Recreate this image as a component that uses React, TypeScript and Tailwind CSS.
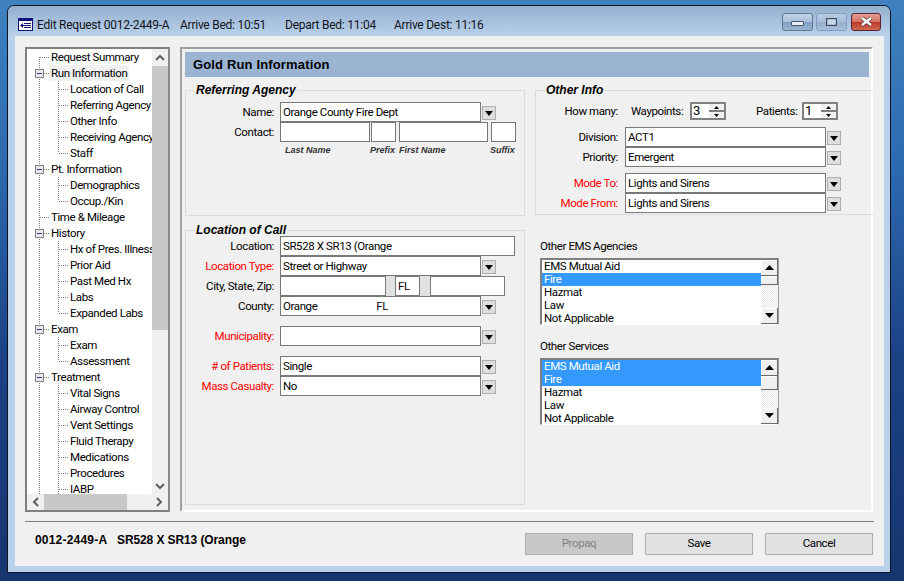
const UI_FONT = "font-['Roboto','Liberation_Sans',Arial,sans-serif]";
const BOLD_FONT = "font-['Liberation_Sans',Arial,sans-serif]";

// ---- tree data ----
type TreeItem = { label: string; level: 0 | 1; box?: boolean; last?: boolean; selected?: boolean };

const treeItems: TreeItem[] = [
  { label: "Request Summary", level: 0 },
  { label: "Run Information", level: 0, box: true, selected: true },
  { label: "Location of Call", level: 1 },
  { label: "Referring Agency", level: 1 },
  { label: "Other Info", level: 1 },
  { label: "Receiving Agency", level: 1 },
  { label: "Staff", level: 1, last: true },
  { label: "Pt. Information", level: 0, box: true },
  { label: "Demographics", level: 1 },
  { label: "Occup./Kin", level: 1, last: true },
  { label: "Time & Mileage", level: 0 },
  { label: "History", level: 0, box: true },
  { label: "Hx of Pres. Illness", level: 1 },
  { label: "Prior Aid", level: 1 },
  { label: "Past Med Hx", level: 1 },
  { label: "Labs", level: 1 },
  { label: "Expanded Labs", level: 1, last: true },
  { label: "Exam", level: 0, box: true },
  { label: "Exam", level: 1 },
  { label: "Assessment", level: 1, last: true },
  { label: "Treatment", level: 0, box: true },
  { label: "Vital Signs", level: 1 },
  { label: "Airway Control", level: 1 },
  { label: "Vent Settings", level: 1 },
  { label: "Fluid Therapy", level: 1 },
  { label: "Medications", level: 1 },
  { label: "Procedures", level: 1 },
  { label: "IABP", level: 1 },
];

function TreeRow({ item, first }: { item: TreeItem; first: boolean }) {
  const dots = { stroke: "#808080", strokeDasharray: "1 1", strokeWidth: 1, fill: "none" };
  return (
    <div className="flex h-4 shrink-0 items-center whitespace-nowrap">
      <svg width="43" height="16" className="shrink-0">
        <path d={first ? "M12.5 8V16" : "M12.5 0V16"} {...dots} />
        {item.level === 0 && <path d="M13 8.5H22" {...dots} />}
        {item.level === 1 && (
          <>
            <path d={item.last ? "M31.5 0V8" : "M31.5 0V16"} {...dots} />
            <path d="M32 8.5H41" {...dots} />
          </>
        )}
        {item.box && (
          <>
            <rect x="8.5" y="4.5" width="8" height="8" fill="#e8e8e8" stroke="#808080" />
            <path d="M10 8.5H15" stroke="#2b3f8c" fill="none" />
          </>
        )}
      </svg>
      <span
        className={
          item.level === 0
            ? item.selected
              ? "ml-[-21px] bg-[#f0f0f0] px-[2px] leading-4"
              : "ml-[-19px] leading-4"
            : "leading-4"
        }
      >
        {item.label}
      </span>
    </div>
  );
}

function Chevron({ dir }: { dir: "up" | "down" | "left" | "right" }) {
  const d = {
    up: "M1 6L5 2L9 6",
    down: "M1 2L5 6L9 2",
    left: "M6 1L2 5L6 9",
    right: "M2 1L6 5L2 9",
  }[dir];
  const horizontal = dir === "left" || dir === "right";
  return (
    <svg width={horizontal ? 8 : 10} height={horizontal ? 10 : 8} className="shrink-0">
      <path d={d} fill="none" stroke="#606060" strokeWidth="2" />
    </svg>
  );
}

function TreePanel() {
  return (
    <div className="flex h-[465px] w-[145px] shrink-0 flex-col border-2 border-[#808080] bg-[#f0f0f0] border-r-[#8a8a8a]">
      <div className="flex min-h-0 flex-1">
        <div className="w-[125px] overflow-hidden rounded-br-[3px] bg-white text-black">
          {treeItems.map((item, i) => (
            <TreeRow key={i} item={item} first={i === 0} />
          ))}
        </div>
        <div className="flex w-[16px] flex-col items-center">
          <div className="flex h-[17px] shrink-0 items-center justify-center">
            <Chevron dir="up" />
          </div>
          <div className="h-[264px] w-full bg-[#c8c8c8]" />
          <div className="flex-1" />
          <div className="flex h-[16px] shrink-0 items-center justify-center">
            <Chevron dir="down" />
          </div>
        </div>
      </div>
      <div className="flex h-[16px] shrink-0 items-center">
        <div className="flex w-[17px] justify-center">
          <Chevron dir="left" />
        </div>
        <div className="h-full w-[83px] bg-[#c8c8c8]" />
        <div className="flex-1" />
        <div className="flex w-[17px] justify-center pr-[1px]">
          <Chevron dir="right" />
        </div>
      </div>
    </div>
  );
}

// ---- form bits ----
function Label({ text, red, className }: { text: string; red?: boolean; className: string }) {
  return (
    <span className={`shrink-0 whitespace-nowrap pt-[2px] text-right ${red ? "text-[#ff0000]" : "text-black"} ${className}`}>
      {text}
    </span>
  );
}

function Field({ value, className }: { value?: string; className: string }) {
  return (
    <div
      className={`flex h-[20px] shrink-0 items-center overflow-hidden whitespace-pre border border-[#787878] bg-white pl-[2px] pt-[2px] text-black ${className}`}
    >
      {value}
    </div>
  );
}

function DropButton() {
  return (
    <div className="ml-[1px] mt-[2px] flex h-[14px] w-[14px] shrink-0 items-center justify-center border border-[#adadad] bg-[#dedede]">
      <svg width="8" height="5">
        <path d="M0 0H8L4 5Z" fill="#000" />
      </svg>
    </div>
  );
}

function ComboRow({
  label,
  value,
  red,
  labelClass,
  fieldClass,
  className,
}: {
  label: string;
  value?: string;
  red?: boolean;
  labelClass: string;
  fieldClass: string;
  className?: string;
}) {
  return (
    <div className={`flex items-center ${className ?? ""}`}>
      <Label text={label} red={red} className={labelClass} />
      <Field value={value} className={fieldClass} />
      <DropButton />
    </div>
  );
}

function GroupBox({ title, className, children }: { title: string; className: string; children?: React.ReactNode }) {
  return (
    <div className={`border border-[#dcdcdc] ${className}`}>
      <div
        className={`-mt-[8px] ml-[9px] h-[15px] w-fit bg-[#f0f0f0] px-[1px] text-[12px] font-bold italic leading-[15px] tracking-normal text-black ${BOLD_FONT}`}
      >
        {title}
      </div>
      {children}
    </div>
  );
}

function SpinBox({ value }: { value: string }) {
  return (
    <div className="flex h-[18px] w-[36px] shrink-0 items-stretch border-2 border-[#808080] bg-white pl-[1px] text-[13px] leading-[14px] text-black">
      <span className="flex-1">{value}</span>
      <div className="flex w-[15px] flex-col">
        <div className="flex h-[6px] items-center justify-center bg-[#f0f0f0]">
          <svg width="5" height="3">
            <path d="M2.5 0L5 3H0Z" fill="#000" />
          </svg>
        </div>
        <div className="h-[2px] bg-[#808080]" />
        <div className="flex h-[6px] items-center justify-center bg-[#f0f0f0]">
          <svg width="5" height="3">
            <path d="M0 0H5L2.5 3Z" fill="#000" />
          </svg>
        </div>
      </div>
    </div>
  );
}

function ScrollArrow({ dir }: { dir: "up" | "down" }) {
  return (
    <div className="flex h-[16px] shrink-0 items-center justify-center border-b border-r border-[#696969] bg-[#f0f0f0] shadow-[inset_1px_1px_0_#fff]">
      <svg width="9" height="5">
        <path d={dir === "up" ? "M4.5 0L9 5H0Z" : "M0 0H9L4.5 5Z"} fill="#000" />
      </svg>
    </div>
  );
}

function ListBox({ selected, thumbClass }: { selected: string[]; thumbClass: string }) {
  const options = ["EMS Mutual Aid", "Fire", "Hazmat", "Law", "Not Applicable"];
  return (
    <div className="flex h-[67px] w-[239px] border-b border-l-2 border-r border-t-2 border-[#808080] border-b-white border-r-[#a0a0a0] bg-white">
      <div className="flex-1 overflow-hidden text-black">
        {options.map((o) => (
          <div
            key={o}
            className={`h-[13px] pl-[2px] leading-[13px] ${selected.includes(o) ? "bg-[#3399ff] text-white" : ""}`}
          >
            {o}
          </div>
        ))}
      </div>
      <div className="flex w-[17px] flex-col bg-[repeating-conic-gradient(#e8e8e8_0_25%,#fff_0_50%)] bg-[length:2px_2px]">
        <ScrollArrow dir="up" />
        <div className={`shrink-0 border-b border-r border-[#696969] bg-[#f0f0f0] shadow-[inset_1px_1px_0_#fff] ${thumbClass}`} />
        <div className="flex-1" />
        <ScrollArrow dir="down" />
      </div>
    </div>
  );
}

function ActionButton({ text, disabled }: { text: string; disabled?: boolean }) {
  return (
    <div
      className={`flex h-[22px] w-[108px] items-center justify-center border border-[#adadad] ${
        disabled ? "bg-[#c8c8c8] text-[#808080]" : "bg-[#e1e1e1] text-black"
      }`}
    >
      {text}
    </div>
  );
}

function ReferringAgency() {
  return (
    <GroupBox title="Referring Agency" className="h-[126px]">
      <ComboRow
        className="mt-[4px]"
        label="Name:"
        value="Orange County Fire Dept"
        labelClass="w-[88px]"
        fieldClass="ml-[6px] w-[201px]"
      />
      <div className="flex">
        <Label text="Contact:" className="w-[88px]" />
        <Field className="ml-[6px] w-[90px]" />
        <Field className="ml-[1px] w-[25px]" />
        <Field className="ml-[3px] w-[89px]" />
        <Field className="ml-[3px] w-[25px]" />
      </div>
      <div className={`ml-[94px] mt-[2px] flex text-[9px] font-bold italic leading-[12px] tracking-normal text-[#333] ${BOLD_FONT}`}>
        <span className="ml-[5px] w-[85px]">Last Name</span>
        <span className="w-[29px]">Prefix</span>
        <span className="w-[91px]">First Name</span>
        <span>Suffix</span>
      </div>
    </GroupBox>
  );
}

function LocationOfCall() {
  const labelClass = "w-[88px]";
  const fieldClass = "ml-[6px] w-[201px]";
  return (
    <GroupBox title="Location of Call" className="mt-[14px] h-[275px]">
      <div className="mt-[-2px] flex items-center">
        <Label text="Location:" className={labelClass} />
        <Field value="SR528 X SR13 (Orange" className="ml-[6px] w-[235px]" />
      </div>
      <ComboRow label="Location Type:" red value="Street or Highway" labelClass={labelClass} fieldClass={fieldClass} />
      <div className="flex items-center">
        <Label text="City, State, Zip:" className={labelClass} />
        <Field className="ml-[6px] w-[106px]" />
        <div className="h-[20px] w-[9px] bg-[#e1e1e1]" />
        <Field value="FL" className="w-[25px]" />
        <div className="h-[20px] w-[10px] bg-[#e1e1e1]" />
        <Field className="w-[75px]" />
      </div>
      <ComboRow
        label="County:"
        value={"Orange                        FL"}
        labelClass={labelClass}
        fieldClass={fieldClass}
      />
      <ComboRow className="mt-[10px]" label="Municipality:" red labelClass={labelClass} fieldClass={fieldClass} />
      <ComboRow
        className="mt-[10px]"
        label="# of Patients:"
        red
        value="Single"
        labelClass={labelClass}
        fieldClass={fieldClass}
      />
      <ComboRow label="Mass Casualty:" red value="No" labelClass={labelClass} fieldClass={fieldClass} />
    </GroupBox>
  );
}

function OtherInfo() {
  const labelClass = "w-[82px]";
  const fieldClass = "ml-[7px] w-[201px]";
  return (
    <GroupBox title="Other Info" className="h-[125px] border-r-0">
      <div className="mt-[4px] flex h-[18px] items-center">
        <Label text="How many:" className={labelClass} />
        <Label text="Waypoints:" className="ml-[13px] w-[52px]" />
        <div className="ml-[7px]">
          <SpinBox value="3" />
        </div>
        <Label text="Patients:" className="ml-[30px] w-[39px]" />
        <div className="ml-[7px]">
          <SpinBox value="1" />
        </div>
      </div>
      <ComboRow className="mt-[7px]" label="Division:" value="ACT1" labelClass={labelClass} fieldClass={fieldClass} />
      <ComboRow label="Priority:" value="Emergent" labelClass={labelClass} fieldClass={fieldClass} />
      <ComboRow className="mt-[6px]" label="Mode To:" red value="Lights and Sirens" labelClass={labelClass} fieldClass={fieldClass} />
      <ComboRow label="Mode From:" red value="Lights and Sirens" labelClass={labelClass} fieldClass={fieldClass} />
    </GroupBox>
  );
}

function FormPanel() {
  return (
    <div className="h-[465px] w-[693px] shrink-0 border-l-2 border-t-2 border-[#a0a0a0] border-b-white border-r-white pl-[3px] pt-[3px] [border-bottom-width:2px] [border-right-width:2px]">
      <div className={`flex h-[25px] w-[684px] items-center bg-[#9ab4d2] pl-[8px] text-[13px] font-bold tracking-[0.15px] text-black ${BOLD_FONT}`}>
        Gold Run Information
      </div>
      <div className="mt-[13px] flex">
        <div className="w-[340px] shrink-0">
          <ReferringAgency />
          <LocationOfCall />
        </div>
        <div className="ml-[10px] w-[338px] shrink-0">
          <OtherInfo />
          <div className="ml-[5px]">
            <div className="mt-[25px] h-[13px] leading-[13px] text-black">Other EMS Agencies</div>
            <div className="mt-[5px]">
              <ListBox selected={["Fire"]} thumbClass="h-[9px]" />
            </div>
            <div className="mt-[15px] h-[13px] leading-[13px] text-black">Other Services</div>
            <div className="mt-[5px]">
              <ListBox selected={["EMS Mutual Aid", "Fire"]} thumbClass="h-[14px]" />
            </div>
          </div>
        </div>
      </div>
    </div>
  );
}

function TitleBar() {
  return (
    <div className="flex h-[30px] items-center bg-[linear-gradient(180deg,#94b0d0,#b9d1ea)] pl-[10px] pt-[7px] text-[12px] tracking-[-0.25px] text-[#10131a]">
      <svg width="15" height="13" className="shrink-0">
        <rect x="0.5" y="0.5" width="14" height="12" fill="#fff" stroke="#12127a" />
        <rect x="1" y="1" width="13" height="2" fill="#12127a" />
        <path d="M6 5.5H13M5 7.5H13M6 9.5H13" stroke="#12127a" fill="none" />
        <path d="M2 7.5L5 5V10Z" fill="#12127a" />
      </svg>
      <span className="ml-[4px] w-[143px] whitespace-nowrap">Edit Request 0012-2449-A</span>
      <span className="w-[105px] whitespace-nowrap">Arrive Bed: 10:51</span>
      <span className="w-[109px] whitespace-nowrap">Depart Bed: 11:04</span>
      <span className="whitespace-nowrap">Arrive Dest: 11:16</span>
      <div className="-mt-[6px] ml-auto mr-[9px] flex">
        <div className="flex h-[18px] w-[31px] items-center justify-center rounded-[3px] border border-[#5c7794] bg-[linear-gradient(180deg,#c4d4e7_0%,#a9bfd9_50%,#7f9dc2_52%,#9db6d3_100%)]">
          <div className="mt-[4px] h-[5px] w-[13px] rounded-[1px] border border-[#46566c] bg-[#e8eef6]" />
        </div>
        <div className="ml-[3px] flex h-[18px] w-[31px] items-center justify-center rounded-[3px] border border-[#7f9dc2] bg-[linear-gradient(180deg,#b7cbe2_0%,#a6bdd8_50%,#94aecd_52%,#a8c0db_100%)]">
          <div className="h-[8px] w-[11px] border border-[#3d4a5c] bg-[#c9d8e8] shadow-[inset_0_0_0_1px_#a6bdd8]" />
        </div>
        <div className="ml-[4px] flex h-[18px] w-[30px] items-center justify-center rounded-[3px] border border-[#5c2030] bg-[linear-gradient(180deg,#e2a08f_0%,#d17060_50%,#b8382a_52%,#cf6a50_100%)]">
          <svg width="15" height="11">
            <path d="M3 2L12 9M12 2L3 9" stroke="#5a3a3a" strokeWidth="4" fill="none" />
            <path d="M3 2L12 9M12 2L3 9" stroke="#fff" strokeWidth="2.4" fill="none" />
          </svg>
        </div>
      </div>
    </div>
  );
}

export default function App() {
  return (
    <div
      className={`h-[581px] w-[904px] overflow-hidden bg-[linear-gradient(180deg,#3f82bf_0%,#2c68ae_30%,#1c4185_62%,#16366f_100%)] pl-[7px] pt-[5px] text-[11.5px] tracking-[-0.4px] ${UI_FONT}`}
    >
      <div className="h-[568px] w-[884px] overflow-hidden rounded-t-[7px] border border-[#0f1420]">
        <TitleBar />
        <div className="h-[536px] border-b-[6px] border-l-[7px] border-r-[6px] border-[#b9d1ea] bg-[#f0f0f0]">
          <div className="flex pl-[10px] pt-[11px]">
            <TreePanel />
            <div className="ml-[10px]">
              <FormPanel />
            </div>
          </div>
          <div className="ml-[10px] mt-[9px] h-[1px] w-[849px] bg-[#808080]" />
          <div className="ml-[20px] mr-[11px] mt-[11px] flex items-start">
            <div className={`flex whitespace-pre text-[12px] font-bold leading-[14px] text-black ${BOLD_FONT}`}>
              <span className="w-[82px] tracking-[0.2px]">0012-2449-A</span>
              <span className="tracking-[-0.1px]">SR528 X SR13 (Orange</span>
            </div>
            <div className="ml-auto flex gap-[12px]">
              <ActionButton text="Propaq" disabled />
              <ActionButton text="Save" />
              <ActionButton text="Cancel" />
            </div>
          </div>
        </div>
      </div>
    </div>
  );
}
